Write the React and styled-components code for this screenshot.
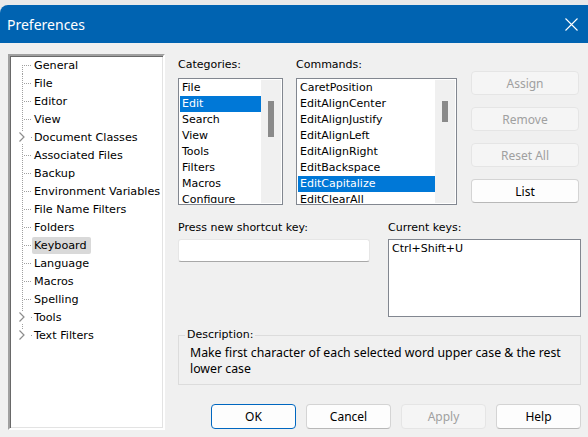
import React from 'react';
import styled, { createGlobalStyle } from 'styled-components';

const tahoma = `"DejaVu Sans", Verdana, sans-serif`;
const segoe = `"Noto Sans", "Open Sans", sans-serif`;

const Global = createGlobalStyle`
  html, body { margin: 0; padding: 0; background: #e9e9e9; }
  body { width: 588px; height: 437px; overflow: hidden; }
  #root { width: 588px; height: 437px; }
  * { box-sizing: border-box; }
`;

const Window = styled.div`
  margin-top: 5px;
  height: 432px;
  background: #f0f0f0;
  border-top-left-radius: 8px;
  overflow: hidden;
  display: flex;
  flex-direction: column;
`;

const TitleBar = styled.div`
  height: 38px;
  flex: none;
  background: #0063b1;
  display: flex;
  align-items: center;
  justify-content: space-between;
  padding: 0 10px 0 7px;
  color: #fff;
  font-family: ${segoe};
  font-size: 14px;
`;

const Body = styled.div`
  display: flex;
  gap: 13px;
  padding: 11px 0 0 8px;
`;

const Tree = styled.div`
  width: 157px;
  height: 376px;
  flex: none;
  background: #fff;
  border: 2px solid;
  border-color: #a0a0a0 #ffffff #ffffff #a0a0a0;
  box-shadow: inset 1px 1px 0 #696969, inset -1px -1px 0 #e3e3e3;
  padding: 0;
`;

const TreeRow = styled.div`
  height: 18px;
  display: flex;
  align-items: center;
`;

const Connector = styled.svg`
  width: 22px;
  height: 18px;
  flex: none;
  display: block;
`;

const TreeLabel = styled.span`
  height: 17px;
  line-height: 17px;
  padding: 0 4px 0 2px;
  font-family: ${tahoma};
  font-size: 11.2px;
  color: #000;
  white-space: nowrap;
  border-radius: 2px;
  background: ${(p) => (p.$selected ? '#d9d9d9' : 'transparent')};
`;

const Right = styled.div`
  width: 403px;
  padding-top: 4px;
  display: flex;
  flex-direction: column;
`;

const TopRow = styled.div`
  display: flex;
`;

const Column = styled.div`
  width: ${(p) => p.$w}px;
  margin-right: ${(p) => p.$mr || 0}px;
  flex: none;
  display: flex;
  flex-direction: column;
`;

const FieldLabel = styled.div`
  font-family: ${tahoma};
  font-size: 11px;
  line-height: 14px;
  height: 14px;
  color: #000;
  margin-bottom: ${(p) => (p.$mb != null ? p.$mb : 6)}px;
  white-space: nowrap;
`;

const ListBox = styled.div`
  height: 127px;
  border: 1px solid #828790;
  background: #fff;
  padding: 1px;
  display: flex;
`;

const ListItems = styled.div`
  flex: 1;
  overflow: hidden;
`;

const ListItem = styled.div`
  height: 16px;
  line-height: 16px;
  padding-left: 2px;
  font-family: ${tahoma};
  font-size: 11px;
  white-space: nowrap;
  background: ${(p) => (p.$selected ? '#0078d7' : 'transparent')};
  color: ${(p) => (p.$selected ? '#fff' : '#000')};
`;

const Track = styled.div`
  width: 20px;
  flex: none;
  background: #f0f0f0;
  display: flex;
  justify-content: center;
  align-items: flex-start;
`;

const Thumb = styled.div`
  width: 6px;
  height: ${(p) => p.$size}px;
  margin-top: ${(p) => p.$top}px;
  background: #8a8a8a;
`;

const ButtonStack = styled.div`
  display: flex;
  flex-direction: column;
  gap: 12px;
  padding-top: 13px;
`;

const Button = styled.button`
  width: ${(p) => p.$w}px;
  height: ${(p) => p.$h}px;
  border-radius: 4px;
  padding: 0;
  font-family: ${segoe};
  font-size: 12px;
  background: #fdfdfd;
  color: #000;
  border: 1px solid #d4d4d4;
  border-bottom-color: #b8b8b8;
  &:disabled {
    background: #f5f5f5;
    color: #a0a0a0;
    border-color: #e5e5e5;
  }
  ${(p) => p.$default && 'border-color: #0067c0; border-bottom-color: #0067c0;'}
`;

const SecondRow = styled.div`
  display: flex;
  margin-top: 16px;
`;

const KeyInput = styled.div`
  height: 23px;
  background: #fff;
  border: 1px solid #e6e6e6;
  border-bottom-color: #a8a8a8;
  border-radius: 3px;
`;

const KeysBox = styled.div`
  height: 78px;
  background: #fff;
  border: 1px solid #828790;
  padding: 2px 3px;
  font-family: ${tahoma};
  font-size: 11px;
  line-height: 14px;
  color: #000;
`;

const Group = styled.fieldset`
  margin: 11px 0 0 0;
  padding: 3px 8px 7px 6px;
  border: 1px solid #dcdcdc;
  min-width: 0;
`;

const Legend = styled.legend`
  padding: 0 2px;
  font-family: ${tahoma};
  font-size: 11px;
  line-height: 14px;
  color: #000;
`;

const Description = styled.p`
  margin: 0;
  padding-left: 5px;
  font-family: ${segoe};
  font-size: 12.3px;
  line-height: 16px;
  color: #000;
`;

const DialogButtons = styled.div`
  display: flex;
  justify-content: flex-end;
  gap: 10px;
  margin-top: 19px;
`;

const treeItems = [
  { label: 'General' },
  { label: 'File' },
  { label: 'Editor' },
  { label: 'View' },
  { label: 'Document Classes', expandable: true },
  { label: 'Associated Files' },
  { label: 'Backup' },
  { label: 'Environment Variables' },
  { label: 'File Name Filters' },
  { label: 'Folders' },
  { label: 'Keyboard', selected: true },
  { label: 'Language' },
  { label: 'Macros' },
  { label: 'Spelling' },
  { label: 'Tools', expandable: true },
  { label: 'Text Filters', expandable: true },
];

const categories = ['File', 'Edit', 'Search', 'View', 'Tools', 'Filters', 'Macros', 'Configure'];
const commands = [
  'CaretPosition',
  'EditAlignCenter',
  'EditAlignJustify',
  'EditAlignLeft',
  'EditAlignRight',
  'EditBackspace',
  'EditCapitalize',
  'EditClearAll',
];

function TreeLines({ first, last, expandable }) {
  const dots = [];
  const yStart = first ? 9 : 0;
  const yEnd = last ? 9 : 18;
  for (let y = yStart; y < yEnd; y += 2) {
    if (expandable && y > 3 && y < 15) continue;
    dots.push(<rect key={'v' + y} x={12} y={y} width={1} height={1} fill="#a0a0a0" />);
  }
  if (expandable) {
    dots.push(<rect key="h" x={21} y={9} width={1} height={1} fill="#a0a0a0" />);
  } else {
    for (let x = 14; x < 22; x += 2) {
      dots.push(<rect key={'h' + x} x={x} y={9} width={1} height={1} fill="#a0a0a0" />);
    }
  }
  return (
    <Connector viewBox="0 0 22 18">
      {dots}
      {expandable && (
        <path d="M9.5 4.5 L14 9 L9.5 13.5" fill="none" stroke="#8c8c8c" strokeWidth="1.2" />
      )}
    </Connector>
  );
}

export default function App() {
  return (
    <>
      <Global />
      <Window>
        <TitleBar>
          <span>Preferences</span>
          <svg width="13" height="13" viewBox="0 0 13 13">
            <path d="M0.5 0.5 L12.5 12.5 M12.5 0.5 L0.5 12.5" stroke="#fff" strokeWidth="1.1" />
          </svg>
        </TitleBar>
        <Body>
          <Tree>
            {treeItems.map((it, i) => (
              <TreeRow key={it.label}>
                <TreeLines first={i === 0} last={i === treeItems.length - 1} expandable={it.expandable} />
                <TreeLabel $selected={it.selected}>{it.label}</TreeLabel>
              </TreeRow>
            ))}
          </Tree>
          <Right>
            <TopRow>
              <Column $w={105} $mr={13}>
                <FieldLabel>Categories:</FieldLabel>
                <ListBox>
                  <ListItems>
                    {categories.map((c) => (
                      <ListItem key={c} $selected={c === 'Edit'}>{c}</ListItem>
                    ))}
                  </ListItems>
                  <Track>
                    <Thumb $top={21} $size={36} />
                  </Track>
                </ListBox>
              </Column>
              <Column $w={161} $mr={14}>
                <FieldLabel>Commands:</FieldLabel>
                <ListBox>
                  <ListItems>
                    {commands.map((c) => (
                      <ListItem key={c} $selected={c === 'EditCapitalize'}>{c}</ListItem>
                    ))}
                  </ListItems>
                  <Track>
                    <Thumb $top={21} $size={21} />
                  </Track>
                </ListBox>
              </Column>
              <Column $w={108}>
                <ButtonStack>
                  <Button $w={108} $h={24} disabled>Assign</Button>
                  <Button $w={108} $h={24} disabled>Remove</Button>
                  <Button $w={108} $h={24} disabled>Reset All</Button>
                  <Button $w={108} $h={24}>List</Button>
                </ButtonStack>
              </Column>
            </TopRow>
            <SecondRow>
              <Column $w={192} $mr={18}>
                <FieldLabel $mb={4}>Press new shortcut key:</FieldLabel>
                <KeyInput />
              </Column>
              <Column $w={193}>
                <FieldLabel $mb={4}>Current keys:</FieldLabel>
                <KeysBox>Ctrl+Shift+U</KeysBox>
              </Column>
            </SecondRow>
            <Group>
              <Legend>Description:</Legend>
              <Description>
                Make first character of each selected word upper case &amp; the rest lower case
              </Description>
            </Group>
            <DialogButtons>
              <Button $w={85} $h={25} $default>OK</Button>
              <Button $w={85} $h={25}>Cancel</Button>
              <Button $w={85} $h={25} disabled>Apply</Button>
              <Button $w={85} $h={25}>Help</Button>
            </DialogButtons>
          </Right>
        </Body>
      </Window>
    </>
  );
}
